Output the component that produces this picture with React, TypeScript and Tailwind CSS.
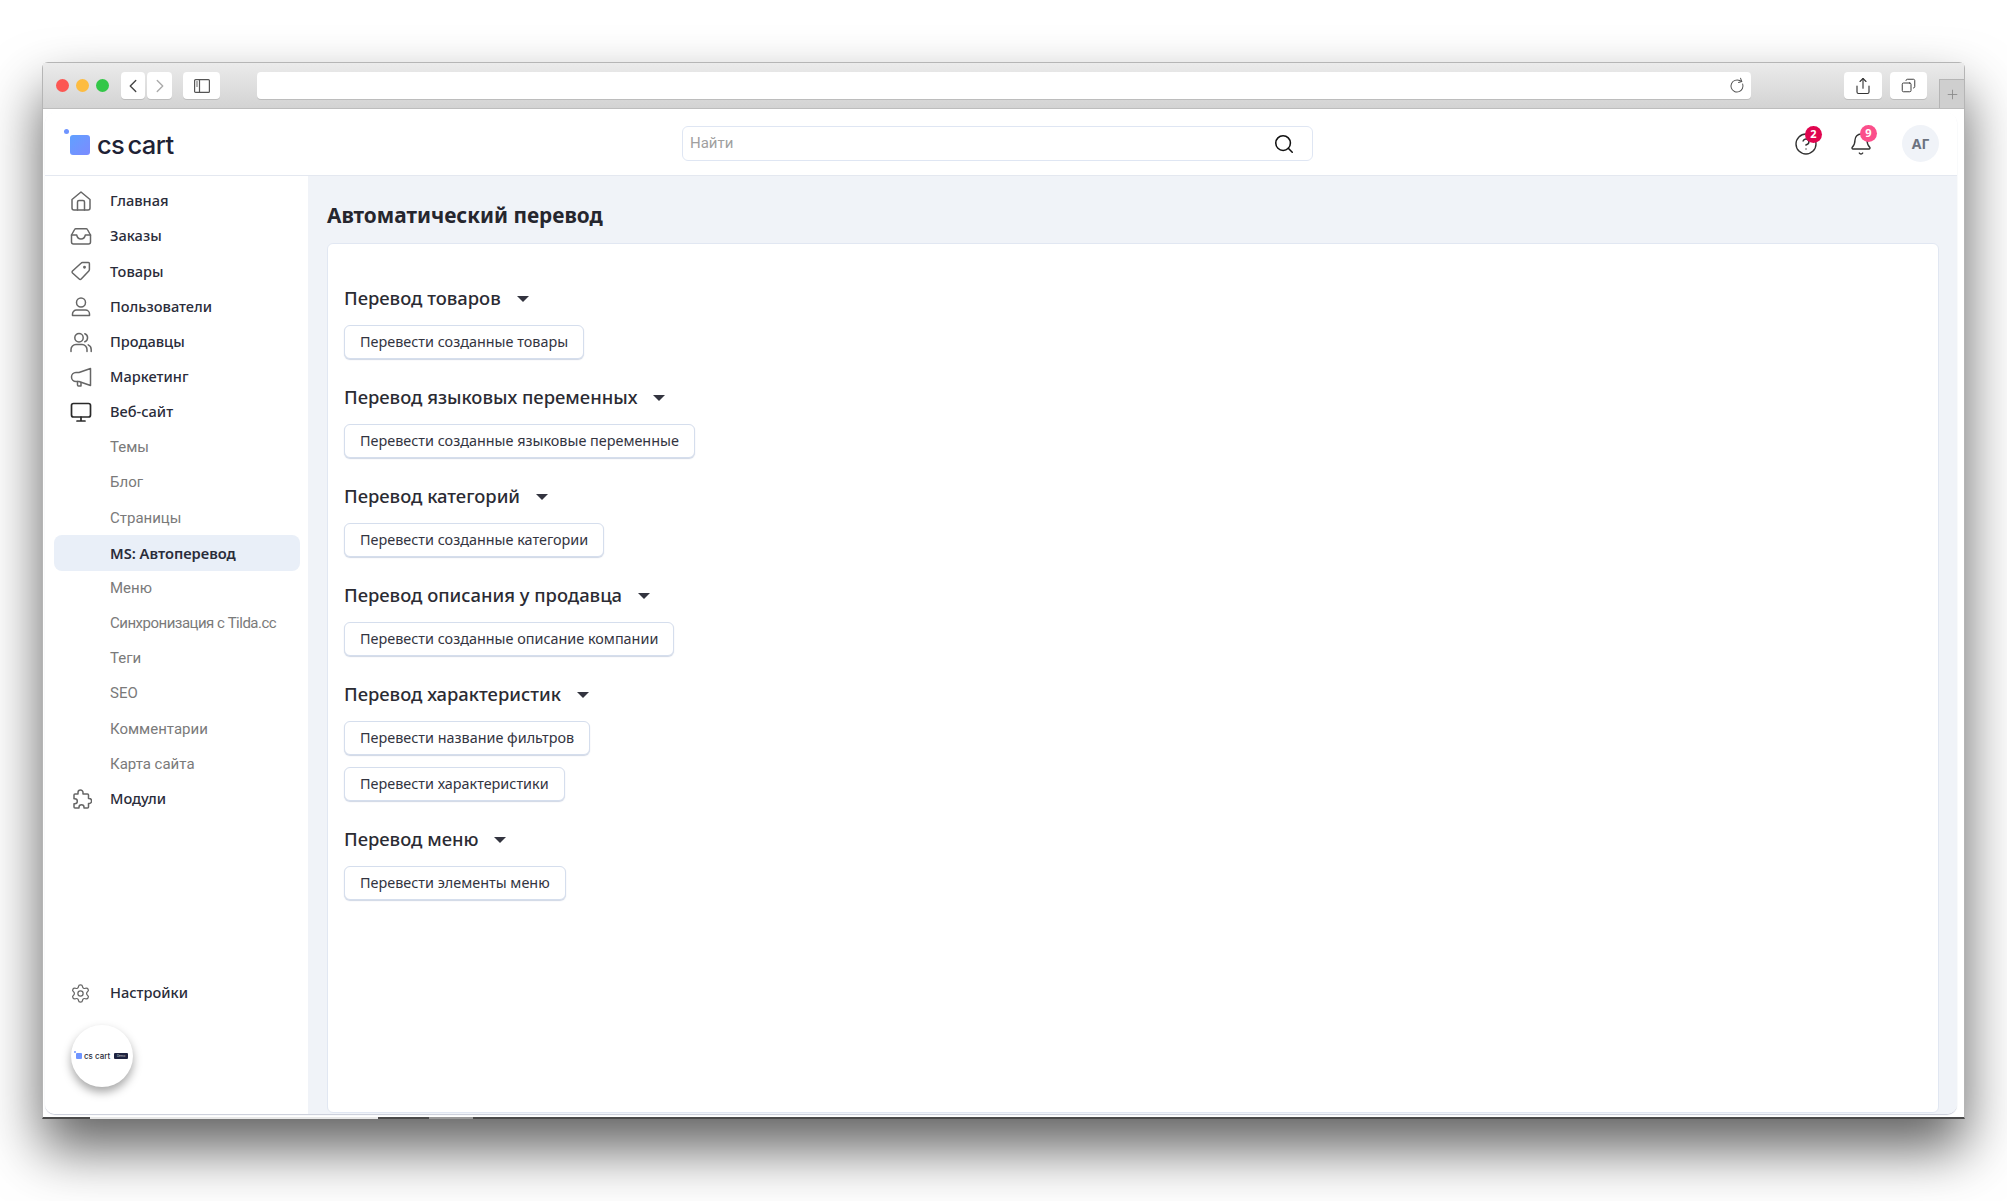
import React from "react";
import { Search, Settings, ChevronLeft, ChevronRight, RotateCw, Share, Copy, Plus, Bell, CircleHelp } from "lucide-react";

const Ico = ({ children, color = "#666", sw = 1.5 }: { children: React.ReactNode; color?: string; sw?: number }) => (
  <svg width="22" height="22" viewBox="0 0 22 22" fill="none" stroke={color} strokeWidth={sw} strokeLinejoin="round" strokeLinecap="round">{children}</svg>
);

const HomeIcon = () => (
  <Ico>
    <path d="M2 9.5 11 2l9 7.5V18a2 2 0 0 1-2 2H4a2 2 0 0 1-2-2Z" />
    <path d="M7.5 20v-8a1.5 1.5 0 0 1 1.5-1.5h4a1.5 1.5 0 0 1 1.5 1.5v8" />
  </Ico>
);
const InboxIcon = () => (
  <Ico>
    <path d="M1.5 10 4.6 4.5a1.5 1.5 0 0 1 1.3-.8h10.2a1.5 1.5 0 0 1 1.3.8L20.5 10v7a2 2 0 0 1-2 2h-15a2 2 0 0 1-2-2Z" />
    <path d="M1.5 10h5.2c.5 2.6 2 4 4.3 4s3.8-1.4 4.3-4h5.2" />
  </Ico>
);
const TagIcon = () => (
  <Ico>
    <path d="M12.4 2.6h6a1 1 0 0 1 1 1v6a2 2 0 0 1-.6 1.4l-7.6 8a1.4 1.4 0 0 1-2 0L2.5 13a1.4 1.4 0 0 1 0-2l8.5-7.8a2 2 0 0 1 1.4-.6Z" />
    <circle cx="14.5" cy="7.3" r="0.7" fill="#666" />
  </Ico>
);
const UserIcon = () => (
  <Ico>
    <circle cx="11" cy="6.5" r="4.5" />
    <path d="M2.5 19.6v-1.6a4 4 0 0 1 4-4h9a4 4 0 0 1 4 4v1.6Z" />
  </Ico>
);
const UsersIcon = () => (
  <Ico>
    <circle cx="9" cy="6.8" r="4.2" />
    <path d="M1 20.5v-2a5 5 0 0 1 5-5h6a5 5 0 0 1 5 5v2" />
    <path d="M14.8 2.8a4.2 4.2 0 0 1 0 7.9" />
    <path d="M21.2 20.5v-2a5 5 0 0 0-3-4.6" />
  </Ico>
);
const MegaphoneIcon = () => (
  <Ico>
    <path d="M20.5 2.5v17L9 15.5H6a4.5 4.5 0 0 1 0-9h3Z" />
    <path d="M7.5 15.5v3.5a1 1 0 0 0 1 1H11v-3.5" />
  </Ico>
);
const MonitorIcon = () => (
  <Ico color="#2a2a2a" sw={1.7}>
    <rect x="1.5" y="2.5" width="19" height="13.5" rx="2" />
    <path d="M11 16v3.5M7 20h8" />
  </Ico>
);
const PuzzleIcon = () => (
  <Ico>
    <path d="M8 4.5a2.5 2.5 0 0 1 5 0V6h4.5a1 1 0 0 1 1 1v3.5h.6a2.5 2.5 0 0 1 0 5h-.6V19a1 1 0 0 1-1 1H14v-.8a2.5 2.5 0 0 0-5 0v.8H5a1 1 0 0 1-1-1v-3.2h.8a2.5 2.5 0 0 0 0-5H4V7a1 1 0 0 1 1-1h3Z" />
  </Ico>
);

const Row = ({ icon, label }: { icon: React.ReactNode; label: string }) => (
  <div className="flex h-[35.2px] items-center">
    <div className="flex w-[65px] justify-center pl-[8px] pr-[2px]"><div className="flex w-[22px] justify-center text-[#666]">{icon}</div></div>
    <span className="text-[14.6px] font-medium text-[#2a2c3a] font-['Noto_Sans',sans-serif]">{label}</span>
  </div>
);

const Sub = ({ label, active, tight }: { label: string; active?: boolean; tight?: boolean }) =>
  active ? (
    <div className="ml-[9px] mr-[8px] flex h-[35.2px] items-center rounded-lg bg-[#e9eff8] pl-[56px] text-[14.7px] font-semibold text-[#2a2c3a] font-['Noto_Sans',sans-serif]">{label}</div>
  ) : (
    <div className={`flex h-[35.2px] items-center pl-[65px] text-[15px] text-[#7a7a7a] font-['Roboto',sans-serif] ${tight ? "tracking-[-0.5px]" : ""}`}>{label}</div>
  );

const Btn = ({ label }: { label: string }) => (
  <button className="flex h-[34px] w-fit items-center rounded-md border border-[#d5deed] bg-white px-[15px] text-[14.4px] text-[#33343f] shadow-[0_1px_1px_rgba(120,140,180,0.35)] font-['Noto_Sans',sans-serif]">{label}</button>
);

const Section = ({ title, buttons }: { title: string; buttons: string[] }) => (
  <section className="mb-[24px] flex flex-col">
    <div className="mb-[13px] flex h-[28px] items-center gap-[16px]">
      <h2 className="text-[18.4px] font-medium text-[#2b2b33] font-['Noto_Sans',sans-serif]">{title}</h2>
      <span className="mt-[1px] h-0 w-0 border-x-[6px] border-t-[6.5px] border-x-transparent border-t-[#33343f]" />
    </div>
    <div className="flex flex-col gap-[12px]">
      {buttons.map((b) => <Btn key={b} label={b} />)}
    </div>
  </section>
);

const ToolBtn = ({ w, children, cls = "" }: { w: string; children: React.ReactNode; cls?: string }) => (
  <div className={`flex h-[27px] items-center justify-center rounded-[4px] bg-white shadow-[0_1px_0_rgba(0,0,0,0.12)] ${w} ${cls}`}>{children}</div>
);

const Logo = ({ small }: { small?: boolean }) => small ? (
  <div className="flex items-center gap-[2px]">
    <span className="relative h-[6px] w-[6px] rounded-[1px] bg-[#6f94ff]">
      <span className="absolute left-[-2px] top-[-2px] h-[2px] w-[2px] rounded-full bg-[#6f94ff]" />
    </span>
    <span className="text-[8px] font-medium leading-none text-[#2a2c3a] font-['Inter',sans-serif]">cs cart</span>
    <span className="ml-[2px] flex h-[6px] w-[14px] items-center justify-center rounded-[1px] bg-[#1e2340] text-[3px] leading-none text-[#ccc] font-['Inter',sans-serif]">Demo</span>
  </div>
) : (
  <div className="flex items-center gap-[7px]">
    <div className="relative h-[20px] w-[20px] rounded-[3px] bg-gradient-to-br from-[#5fa0ff] to-[#7b8bff]">
      <span className="absolute left-[-6px] top-[-6px] h-[5px] w-[5px] rounded-full bg-[#6f94ff]" />
    </div>
    <span className="text-[25.5px] font-medium leading-none tracking-[-0.6px] [word-spacing:-3px] text-[#1e2235] font-['Inter',sans-serif]">cs cart</span>
  </div>
);

export default function App() {
  return (
    <div className="h-[1201px] w-[2007px] overflow-hidden bg-white pl-[42px] pt-[62px]">
      <div className="relative flex h-[1057px] w-[1923px] flex-col rounded-t-[6px] border-x border-t border-[#b5b5b5] border-b-2 border-b-[#4a4a4a] bg-white shadow-[0_30px_55px_rgba(0,0,0,0.62)]">
        {/* browser toolbar */}
        <div className="relative flex h-[46px] shrink-0 items-center border-b border-[#bdbdbd] bg-gradient-to-b from-[#ebebeb] to-[#d3d3d3] pl-[13px]">
          <div className="flex gap-[7px]">
            <span className="h-[13px] w-[13px] rounded-full bg-[#fc5753]" />
            <span className="h-[13px] w-[13px] rounded-full bg-[#fdbc40]" />
            <span className="h-[13px] w-[13px] rounded-full bg-[#33c748]" />
          </div>
          <div className="ml-[12px] flex gap-[2px]">
            <ToolBtn w="w-[24px]"><ChevronLeft size={22} strokeWidth={1.5} color="#444" /></ToolBtn>
            <ToolBtn w="w-[25px]"><ChevronRight size={22} strokeWidth={1.5} color="#aaa" /></ToolBtn>
          </div>
          <ToolBtn w="w-[37px]" cls="ml-[11px]">
            <svg width="16" height="14" viewBox="0 0 16 14" fill="none" stroke="#555" strokeWidth="1.2">
              <rect x="0.6" y="0.6" width="14.8" height="12.8" rx="1" />
              <path d="M5.5 0.6v12.8" />
              <path d="M2 3h2M2 5h2M2 7h2" strokeWidth="0.9" />
            </svg>
          </ToolBtn>
          <ToolBtn w="w-[1494px]" cls="ml-[37px] justify-end pr-[6px]"><RotateCw size={16} strokeWidth={1.5} color="#555" className="-rotate-[20deg]" /></ToolBtn>
          <ToolBtn w="w-[38px]" cls="ml-[93px]"><Share size={18} strokeWidth={1.5} color="#333" /></ToolBtn>
          <ToolBtn w="w-[37px]" cls="ml-[8px]"><Copy size={15} strokeWidth={1.5} color="#333" className="-scale-x-100" /></ToolBtn>
          <div className="absolute bottom-0 right-0 flex h-[29px] w-[25px] items-center justify-center border-l border-t border-[#b5b5b5] bg-[#cfcfcf]">
            <Plus size={15} strokeWidth={1.4} color="#8a8a8a" />
          </div>
        </div>

        {/* app */}
        <div className="mb-[3px] ml-[2px] mr-[7px] mt-[4px] flex min-h-0 flex-1 flex-col overflow-hidden rounded-[10px] bg-white shadow-[0_1px_1px_rgba(120,130,160,0.4)]">
          <header className="flex h-[63px] shrink-0 items-center border-b border-[#e4e8f0] bg-white pb-[1px]">
            <div className="w-[637px] pl-[25px] pt-[3px]"><Logo /></div>
            <div className="flex h-[35px] w-[631px] items-center justify-between rounded-md border border-[#dfe6f3] bg-white pl-[7px] pr-[17px] text-[15px] text-[#a0a0a0] font-['Roboto',sans-serif]">
              <span>Найти</span>
              <Search size={22} strokeWidth={1.7} color="#111" />
            </div>
            <div className="ml-auto mr-[18px] flex items-center">
              <div className="relative h-[24px] w-[24px]">
                <CircleHelp size={24} strokeWidth={1.4} color="#333" />
                <span className="absolute left-[11px] top-[-6px] flex h-[17px] w-[17px] items-center justify-center rounded-full bg-[#e0054f] text-[11px] font-bold text-white font-['Noto_Sans',sans-serif]">2</span>
              </div>
              <div className="relative ml-[31px] h-[24px] w-[24px]">
                <Bell size={24} strokeWidth={1.4} color="#333" />
                <span className="absolute left-[11px] top-[-7px] flex h-[17px] w-[17px] items-center justify-center rounded-full bg-[#fb4f8b] text-[11px] font-bold text-white font-['Noto_Sans',sans-serif]">9</span>
              </div>
              <div className="ml-[29px] flex h-[37px] w-[37px] items-center justify-center rounded-full bg-[#f0f3f8] text-[14px] font-bold text-[#6b7280] font-['Noto_Sans',sans-serif]">АГ</div>
            </div>
          </header>
          <div className="flex min-h-0 flex-1">
            <aside className="flex w-[263px] shrink-0 flex-col bg-white pt-[7.5px]">
              <Row icon={<HomeIcon />} label="Главная" />
              <Row icon={<InboxIcon />} label="Заказы" />
              <Row icon={<TagIcon />} label="Товары" />
              <Row icon={<UserIcon />} label="Пользователи" />
              <Row icon={<UsersIcon />} label="Продавцы" />
              <Row icon={<MegaphoneIcon />} label="Маркетинг" />
              <Row icon={<MonitorIcon />} label="Веб-сайт" />
              {["Темы", "Блог", "Страницы"].map((l) => <Sub key={l} label={l} />)}
              <Sub label="MS: Автоперевод" active />
              <Sub label="Меню" />
              <Sub label="Синхронизация с Tilda.cc" tight />
              {["Теги", "SEO", "Комментарии", "Карта сайта"].map((l) => <Sub key={l} label={l} />)}
              <Row icon={<PuzzleIcon />} label="Модули" />
              <div className="mt-auto">
                <Row icon={<Settings size={21} strokeWidth={1.4} />} label="Настройки" />
                <div className="mb-[27px] ml-[26px] mt-[14px] flex h-[62px] w-[62px] items-center justify-center rounded-full bg-white shadow-[0_5px_10px_rgba(0,0,0,0.35)]"><Logo small /></div>
              </div>
            </aside>
            <main className="flex min-w-0 flex-1 flex-col bg-[#f0f3f8] pb-[1px] pl-[19px] pr-[18px]">
              <h1 className="flex h-[67px] shrink-0 items-center pt-[12px] text-[20.8px] font-bold text-[#26262e] font-['Noto_Sans',sans-serif]">Автоматический перевод</h1>
              <div className="min-h-0 flex-1 rounded-[6px] border border-[#e1e7f2] bg-white px-[16px] pt-[40px]">
                <Section title="Перевод товаров" buttons={["Перевести созданные товары"]} />
                <Section title="Перевод языковых переменных" buttons={["Перевести созданные языковые переменные"]} />
                <Section title="Перевод категорий" buttons={["Перевести созданные категории"]} />
                <Section title="Перевод описания у продавца" buttons={["Перевести созданные описание компании"]} />
                <Section title="Перевод характеристик" buttons={["Перевести название фильтров", "Перевести характеристики"]} />
                <Section title="Перевод меню" buttons={["Перевести элементы меню"]} />
              </div>
            </main>
          </div>
        </div>
        {/* page scrollbar thumb seen through the window's bottom edge */}
        <div className="absolute bottom-[-2px] left-[47px] h-[2px] w-[288px] bg-[#e8e8e8]" />
        <div className="absolute bottom-[-2px] left-[386px] h-[2px] w-[44px] bg-[#999999]" />
      </div>
    </div>
  );
}
